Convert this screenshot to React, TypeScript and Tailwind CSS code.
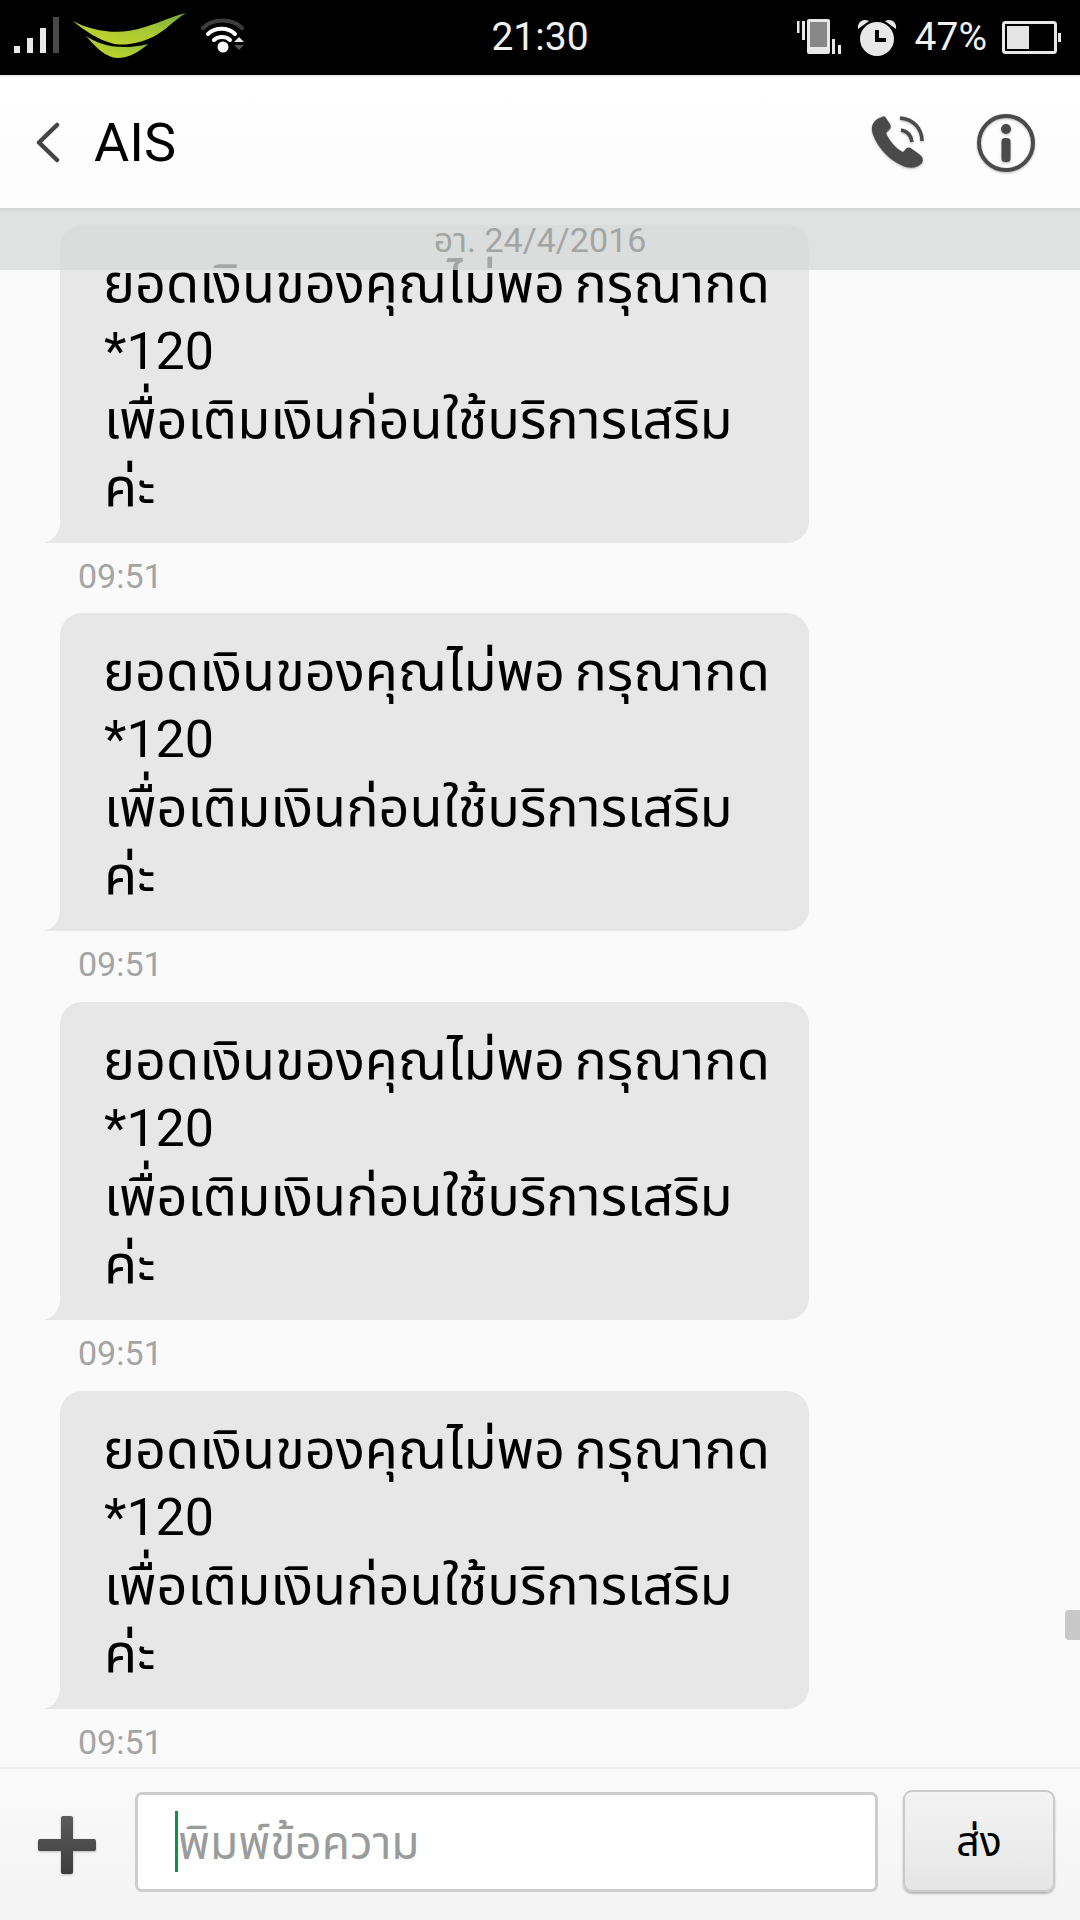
import React from "react";

const FONT = "[font-family:Roboto,'Noto_Sans_Thai','Noto_Sans','Liberation_Sans',sans-serif]";

function Signal() {
  return (
    <svg width="60" height="40" viewBox="0 0 60 40" className="block">
      <rect x="14" y="29" width="6" height="7" fill="#e8e8e8" />
      <rect x="27" y="21" width="6" height="15" fill="#e8e8e8" />
      <rect x="40" y="11" width="6" height="25" fill="#e8e8e8" />
      <rect x="53" y="0" width="6" height="36" fill="#484848" />
    </svg>
  );
}

function CarrierLogo() {
  return (
    <svg width="114" height="46" viewBox="0 0 114 46" className="block">
      <defs>
        <linearGradient id="lg" x1="0" y1="1" x2="1" y2="0">
          <stop offset="0" stopColor="#c8d82c" />
          <stop offset="0.6" stopColor="#a4c634" />
          <stop offset="1" stopColor="#6fa83a" />
        </linearGradient>
      </defs>
      <path d="M0 8 C22 20 50 22 72 14 C88 9 100 3 113 0 C100 8 92 18 80 24 C62 32 48 33 38 30 C26 27 12 18 0 8 Z" fill="url(#lg)" />
      <path d="M13 23 C26 32 46 38 75 31 C66 39 56 45 44 45 C34 45 22 34 13 23 Z" fill="url(#lg)" />
    </svg>
  );
}

function Wifi() {
  return (
    <svg width="44" height="36" viewBox="0 0 44 36" className="block">
      <path d="M2 10 C12 0 31 0 41 10" fill="none" stroke="#3c3c3c" strokeWidth="4" strokeLinecap="round" />
      <path d="M7 16 C14 9 27 9 34 16" fill="none" stroke="#fff" strokeWidth="4" strokeLinecap="round" />
      <path d="M13 22 C17 18 25 18 29 22" fill="none" stroke="#fff" strokeWidth="4" strokeLinecap="round" />
      <circle cx="22" cy="29" r="5.5" fill="#fff" />
      <path d="M33 24 L38 19 L43 24 Z" fill="#e8e8e8" />
      <path d="M33 27 L43 27 L38 32 Z" fill="#555" />
    </svg>
  );
}

function Vibrate() {
  return (
    <svg width="46" height="36" viewBox="0 0 46 36" className="block">
      <rect x="0" y="2" width="2.5" height="12" fill="#e8e8e8" />
      <rect x="5" y="2" width="3" height="19" fill="#e8e8e8" />
      <rect x="10" y="0" width="23" height="35" rx="2" fill="#e8e8e8" />
      <rect x="13" y="3" width="17" height="25" fill="#888" />
      <rect x="35" y="20" width="3" height="15" fill="#e8e8e8" />
      <rect x="41" y="26" width="3" height="9" fill="#e8e8e8" />
    </svg>
  );
}

function Alarm() {
  return (
    <svg width="40" height="37" viewBox="0 0 40 37" className="block">
      <circle cx="20" cy="20" r="17" fill="#e8e8e8" />
      <path d="M1 10 C0 3 6 -1 12 2 Z" fill="#e8e8e8" />
      <path d="M39 10 C40 3 34 -1 28 2 Z" fill="#e8e8e8" />
      <path d="M20 11 V21 H29" fill="none" stroke="#000" strokeWidth="4" />
    </svg>
  );
}

function Battery() {
  return (
    <svg width="60" height="34" viewBox="0 0 60 34" className="block">
      <rect x="1.5" y="1.5" width="52" height="30" rx="2" fill="none" stroke="#e8e8e8" strokeWidth="3" />
      <rect x="5" y="5" width="22" height="23" fill="#e4e4e4" />
      <rect x="56" y="12" width="3" height="9" fill="#e8e8e8" />
    </svg>
  );
}

function Back() {
  return (
    <svg width="24" height="42" viewBox="0 0 24 42" className="block">
      <path d="M21 3 L3 20.500 L21 38" fill="none" stroke="#444" strokeWidth="4.500" strokeLinecap="round" strokeLinejoin="round" />
    </svg>
  );
}

function PhoneIcon() {
  return (
    <svg width="54" height="54" viewBox="0 0 54 54" className="block drop-shadow-[0_1px_1px_rgba(0,0,0,0.3)]">
      <path d="M11 1 C4 3 0 8 1 15 C4 28 16 43 32 50 C39 53 47 52 51 47 C53 43 51 40 48 38 L41 33 C38 31 36 31 34 34 L32 36 C25 33 18 24 15 17 L18 14 C20 12 20 10 19 8 L15 2 C14 0 12 0 11 1 Z" fill="#4a4a4a" />
      <path d="M29 2 C42 3 51 12 51 25" fill="none" stroke="#4a4a4a" strokeWidth="3.500" />
      <path d="M30 14 C36 15 40 19 41 26" fill="none" stroke="#4a4a4a" strokeWidth="3.500" />
    </svg>
  );
}

function InfoIcon() {
  return (
    <svg width="60" height="60" viewBox="0 0 60 60" className="block drop-shadow-[0_1px_1px_rgba(0,0,0,0.3)]">
      <circle cx="30" cy="30" r="27" fill="none" stroke="#4a4a4a" strokeWidth="4" />
      <circle cx="30" cy="16" r="5" fill="#4a4a4a" />
      <rect x="25.500" y="25" width="9" height="24" rx="3.500" fill="#4a4a4a" />
    </svg>
  );
}

function Plus() {
  return (
    <svg width="60" height="60" viewBox="0 0 60 60" className="block drop-shadow-[0_1px_1px_rgba(0,0,0,0.25)]">
      <defs>
        <linearGradient id="pl" x1="0" y1="0" x2="0" y2="1">
          <stop offset="0" stopColor="#5c5c5c" />
          <stop offset="1" stopColor="#3c3c3c" />
        </linearGradient>
      </defs>
      <path d="M26 1 H34 A2 2 0 0 1 36 3 V24 H57 A2 2 0 0 1 59 26 V34 A2 2 0 0 1 57 36 H36 V57 A2 2 0 0 1 34 59 H26 A2 2 0 0 1 24 57 V36 H3 A2 2 0 0 1 1 34 V26 A2 2 0 0 1 3 24 H24 V3 A2 2 0 0 1 26 1 Z" fill="url(#pl)" />
    </svg>
  );
}

function Message() {
  return (
    <div>
      <div className="relative w-[749px] h-[318px] ml-[60px] bg-[#e7e7e7] rounded-[22px] rounded-bl-none pl-[44px] pt-[25px] text-[54px] leading-[68px] text-black">
        <svg width="18" height="20" viewBox="0 0 18 20" className="absolute left-[-16px] bottom-0 block">
          <path d="M0 20 C8 18 15 12 16 0 L18 0 L18 20 Z" fill="#e7e7e7" />
        </svg>
        <div className="whitespace-nowrap ml-[-1px] [word-spacing:-4px]">ยอดเงินของคุณไม่พอ กรุณากด</div>
        <div className="whitespace-nowrap text-[52px]">*120</div>
        <div className="whitespace-nowrap">เพื่อเติมเงินก่อนใช้บริการเสริม</div>
        <div className="whitespace-nowrap">ค่ะ</div>
      </div>
      <div className="h-[71px] pl-[78px] pt-[12px] text-[34px] leading-[42px] text-[#a3a5a4]">09:51</div>
    </div>
  );
}

export default function App() {
  return (
    <div className={`w-[1080px] h-[1920px] flex flex-col overflow-hidden bg-[#fafafa] ${FONT}`}>
      <div className="h-[75px] bg-black grid grid-cols-[1fr_auto_1fr] items-center shrink-0">
        <div className="flex items-center">
          <div className="mt-[-1px] ml-0">
            <Signal />
          </div>
          <div className="ml-[13px] mt-[-4px]">
            <CarrierLogo />
          </div>
          <div className="ml-[14px] mt-[-3px]">
            <Wifi />
          </div>
        </div>
        <div className="text-[39px] leading-[75px] text-[#f0f0f0]">21:30</div>
        <div className="flex items-center justify-end pr-[18px]">
          <div className="mt-[-1px]">
            <Vibrate />
          </div>
          <div className="ml-[14px] mt-[-1px]">
            <Alarm />
          </div>
          <div className="ml-[18px] text-[39px] leading-[75px] text-[#f0f0f0]">47%</div>
          <div className="ml-[15px]">
            <Battery />
          </div>
        </div>
      </div>
      <div className="h-[133px] border-t-2 border-[#eeeeee] bg-gradient-to-b from-white to-[#fcfcfc] flex items-center shrink-0 pl-[36px] pr-[44px] z-10">
        <Back />
        <div className="ml-[34px] text-[54px] leading-[60px] text-black">AIS</div>
        <div className="ml-auto">
          <PhoneIcon />
        </div>
        <div className="ml-[51px]">
          <InfoIcon />
        </div>
      </div>
      <div className="relative flex-1 overflow-hidden pt-[17px]">
        <Message />
        <div className="mt-[-1px]">
          <Message />
        </div>
        <Message />
        <Message />
        <div className="absolute top-0 left-0 right-0 h-[62px] pt-[2px] bg-[rgba(216,218,217,0.76)] shadow-[inset_0_6px_6px_-6px_rgba(0,0,0,0.12)] text-center text-[34px] leading-[60px] text-[#a3a5a4]">
          อา. 24/4/2016
        </div>
        <div className="absolute right-0 top-[1402px] w-[15px] h-[30px] bg-[#c8c8c8] rounded-l-[4px]" />
      </div>
      <div className="h-[153px] shrink-0 border-t-2 border-[#f0f0f0] bg-gradient-to-b from-[#fafafa] to-[#f3f3f3] flex items-center pl-[37px] pr-[25px]">
        <Plus />
        <div className="ml-[38px] w-[743px] h-[100px] bg-white border-[3px] border-[#cdcdcd] rounded-[7px] flex items-center pl-[37px] mt-[-6px]">
          <div className="w-[3px] h-[61px] bg-[#0a9544]" />
          <div className="text-[46px] leading-[61px] pt-[3px] text-[#9a9c9b]">พิมพ์ข้อความ</div>
        </div>
        <div className="ml-[25px] w-[152px] h-[102px] pt-[4px] mt-[-7px] rounded-[9px] border-2 border-[#cacaca] bg-gradient-to-b from-[#f3f3f3] to-[#e6e6e6] shadow-[0_2px_2px_rgba(0,0,0,0.25)] flex items-center justify-center text-[41px] text-black">
          ส่ง
        </div>
      </div>
    </div>
  );
}
